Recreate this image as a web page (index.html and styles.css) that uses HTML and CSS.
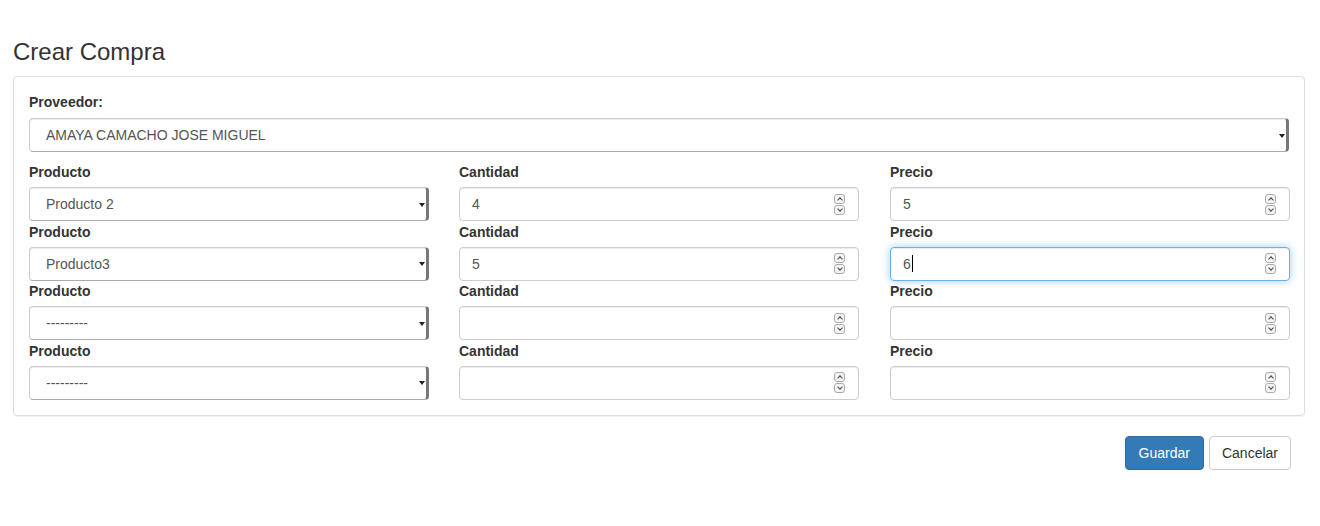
FILE: index.html
```html
<!DOCTYPE html>
<html lang="es">
<head>
<meta charset="utf-8">
<title>Crear Compra</title>
<link rel="stylesheet" href="styles.css">
</head>
<body>
<div class="container">
  <h3 class="title">Crear Compra</h3>
  <div class="panel">
    <div class="form-group">
      <label class="lbl">Proveedor:</label>
      <div class="select"><span class="val">AMAYA CAMACHO JOSE MIGUEL</span><span class="arrow"></span></div>
    </div>
    <div class="grid">
      <div class="col"><label class="lbl">Producto</label><div class="select"><span class="val">Producto 2</span><span class="arrow"></span></div></div>
      <div class="col"><label class="lbl">Cantidad</label><div class="input"><span class="val num">4</span><span class="spin"><i class="up"></i><i class="down"></i></span></div></div>
      <div class="col"><label class="lbl">Precio</label><div class="input"><span class="val num">5</span><span class="spin"><i class="up"></i><i class="down"></i></span></div></div>

      <div class="col"><label class="lbl">Producto</label><div class="select"><span class="val">Producto3</span><span class="arrow"></span></div></div>
      <div class="col"><label class="lbl">Cantidad</label><div class="input"><span class="val num">5</span><span class="spin"><i class="up"></i><i class="down"></i></span></div></div>
      <div class="col"><label class="lbl">Precio</label><div class="input focus"><span class="val num">6<span class="caret"></span></span><span class="spin"><i class="up"></i><i class="down"></i></span></div></div>

      <div class="col"><label class="lbl">Producto</label><div class="select"><span class="val">---------</span><span class="arrow"></span></div></div>
      <div class="col"><label class="lbl">Cantidad</label><div class="input"><span class="val num"></span><span class="spin"><i class="up"></i><i class="down"></i></span></div></div>
      <div class="col"><label class="lbl">Precio</label><div class="input"><span class="val num"></span><span class="spin"><i class="up"></i><i class="down"></i></span></div></div>

      <div class="col"><label class="lbl">Producto</label><div class="select"><span class="val">---------</span><span class="arrow"></span></div></div>
      <div class="col"><label class="lbl">Cantidad</label><div class="input"><span class="val num"></span><span class="spin"><i class="up"></i><i class="down"></i></span></div></div>
      <div class="col"><label class="lbl">Precio</label><div class="input"><span class="val num"></span><span class="spin"><i class="up"></i><i class="down"></i></span></div></div>
    </div>
  </div>
  <div class="actions">
    <button class="btn btn-primary">Guardar</button>
    <button class="btn btn-default">Cancelar</button>
  </div>
</div>
</body>
</html>
```
FILE: styles.css
```css
* { box-sizing: border-box; }
html, body { margin: 0; padding: 0; background: #fff; }
body {
  font-family: "Liberation Sans", Arial, Helvetica, sans-serif;
  font-size: 14px;
  line-height: 20px;
  color: #333;
}
.container { padding: 0 15px 0 13px; width: 1320px; }
.title {
  margin: 38px 0 0 0;
  font-size: 24px;
  font-weight: 500;
  line-height: 28px;
  color: #333;
}
.panel {
  margin-top: 10px;
  border: 1px solid #ddd;
  border-radius: 4px;
  padding: 15px 15px 15px 15px;
  width: 1292px;
  box-shadow: 0 1px 1px rgba(0,0,0,0.05);
}
.form-group { margin-bottom: 10px; }
.form-group .lbl { margin-bottom: 6px; }
.lbl {
  display: block;
  font-weight: bold;
  margin-bottom: 5px;
  line-height: 20px;
  color: #333;
}
.grid {
  display: grid;
  grid-template-columns: 430px 431px 400px;
  row-gap: 0.67px;
}
.col { width: 400px; }
.select, .input {
  position: relative;
  height: 34px;
  border: 1px solid #ccc;
  border-radius: 4px;
  background: #fff;
  box-shadow: inset 0 1px 1px rgba(0,0,0,0.075);
  color: #555;
  display: flex;
  align-items: center;
}
.select .val { padding-left: 16px; flex: 1; }
.input .val { padding-left: 12px; flex: 1; }
.select {
  border-right: 3px solid #777;
  border-bottom-color: #aaa;
}
.select .arrow {
  width: 0; height: 0;
  border-left: 3.5px solid transparent;
  border-right: 3.5px solid transparent;
  border-top: 4px solid #222;
  margin-right: 1px;
  margin-top: 1px;
}
.spin {
  display: flex;
  flex-direction: column;
  gap: 1px;
  margin-right: 13px;
}
.spin i {
  display: block;
  width: 11px;
  height: 10px;
  border: 1px solid #aaa;
  border-radius: 3px;
  background: #f4f4f4;
  position: relative;
}
.spin i::after {
  content: "";
  position: absolute;
  left: 3px;
  width: 3px;
  height: 3px;
  border-left: 1px solid #444;
  border-top: 1px solid #444;
}
.spin .up::after { top: 3px; transform: rotate(45deg); }
.spin .down::after { top: 1px; transform: rotate(225deg); }
.input.focus {
  border-color: #66afe9;
  box-shadow: inset 0 1px 1px rgba(0,0,0,0.075), 0 0 8px rgba(102,175,233,0.6);
}
.caret {
  display: inline-block;
  width: 1px;
  height: 17px;
  background: #000;
  vertical-align: -3px;
  margin-left: 1px;
}
.actions {
  display: flex;
  justify-content: flex-end;
  gap: 5px;
  margin-top: 20px;
  width: 1278px;
}
.btn {
  font-family: inherit;
  font-size: 14px;
  line-height: 20px;
  height: 34px;
  padding: 6px 13px;
  border-radius: 4px;
  border: 1px solid transparent;
  cursor: pointer;
}
.btn-default { padding: 6px 12px; }
.btn-primary { background: #337ab7; border-color: #2e6da4; color: #fff; }
.btn-default { background: #fff; border-color: #ccc; color: #333; }
```
